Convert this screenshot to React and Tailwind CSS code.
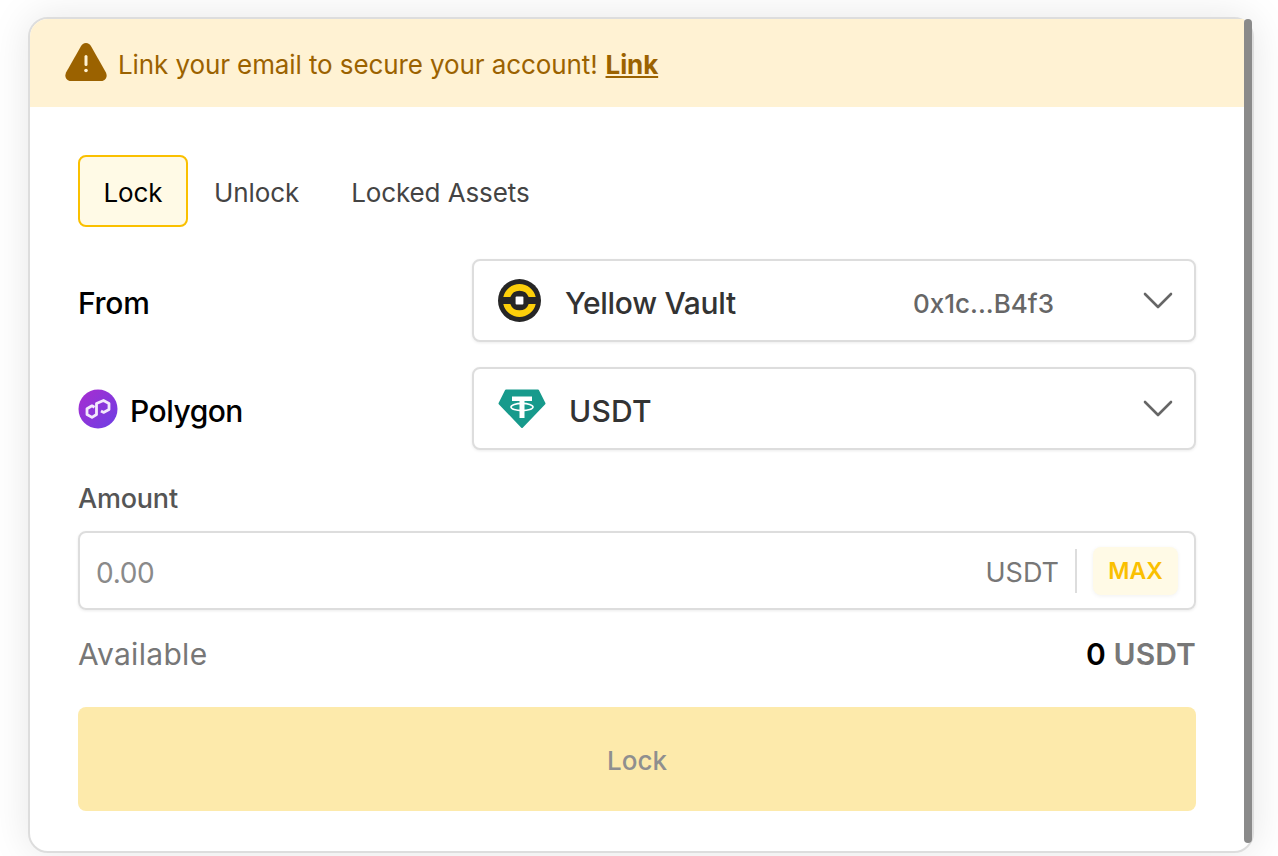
import React from "react";

function WarningIcon() {
  return (
    <svg width="42" height="38" viewBox="0 0 42 38" className="shrink-0 mb-[2px]">
      <path d="M21 0c2.400 0 4 1.300 5.200 3.400l14.600 25.800c2.100 3.900.2 8.800-4.700 8.800H5.900C1 38-.9 33.100 1.200 29.200L15.800 3.400C17 1.300 18.600 0 21 0z" fill="#9b6200" />
      <rect x="19.500" y="12" width="3" height="11" rx="1.500" fill="#fff2d3" />
      <circle cx="21" cy="27.500" r="1.800" fill="#fff2d3" />
    </svg>
  );
}

function VaultIcon() {
  return (
    <svg width="43" height="43" viewBox="0 0 44 44" className="shrink-0">
      <circle cx="22" cy="22" r="22" fill="#262626" />
      <path d="M5.400 18.500A17 17 0 0 1 38.600 18.500H31.400A10 10 0 0 0 12.600 18.500z" fill="#fccf0a" />
      <path d="M5.400 25.500A17 17 0 0 0 38.600 25.500H31.400A10 10 0 0 1 12.600 25.500z" fill="#fccf0a" />
      <rect x="18" y="18" width="8" height="8" rx="1" fill="#fff" />
    </svg>
  );
}

function TetherIcon() {
  return (
    <svg width="48" height="40" viewBox="0 0 48 40" className="shrink-0">
      <path d="M8 1.500H40L46.500 14.500 24 38 1.500 14.500z" fill="#179a8c" stroke="#179a8c" strokeWidth="2" strokeLinejoin="round" />
      <ellipse cx="24" cy="18" rx="11" ry="3.600" fill="none" stroke="#fff" strokeWidth="1.600" />
      <path d="M14 7.500H34V12H26.500V29H21.500V12H14z" fill="#fff" />
    </svg>
  );
}

function PolygonIcon() {
  return (
    <svg width="40" height="40" viewBox="0 0 40 40" className="shrink-0">
      <defs>
        <linearGradient id="polygonGrad" x1="0" y1="0" x2="1" y2="1">
          <stop offset="0" stopColor="#a92cd0" />
          <stop offset="1" stopColor="#6c3fe4" />
        </linearGradient>
      </defs>
      <circle cx="20" cy="20" r="19.500" fill="url(#polygonGrad)" />
      <path d="M16.500 18.200L14 16.800 9 19.700V25.500L14 28.400 18.500 25.500V14.500L25.500 11.500 31 14.500V20.500L25.500 23.400 23 22" fill="none" stroke="#f3e9fc" strokeWidth="2.800" strokeLinejoin="round" />
    </svg>
  );
}

function Chevron() {
  return (
    <svg width="30" height="18" viewBox="0 0 30 18" className="shrink-0">
      <path d="M2 2l13 13L28 2" fill="none" stroke="#666" strokeWidth="2.600" strokeLinecap="round" strokeLinejoin="round" />
    </svg>
  );
}

function SelectBox({ children }) {
  return (
    <div className="w-[724px] h-[83px] flex items-center border-2 border-[#dddddd] rounded-lg bg-white shadow-[0_1px_3px_rgba(0,0,0,0.08)] pl-6 pr-[21px]">
      {children}
    </div>
  );
}

export default function App() {
  return (
    <div className="w-[1278px] h-[856px] overflow-hidden bg-white pt-[17px] pl-[28px] font-['Inter',sans-serif]">
      <div className="w-[1226px] h-[836px] flex border-2 border-[#dddddd] rounded-[20px] bg-white shadow-[0_0_40px_rgba(0,0,0,0.1)]">
        <div className="flex-1 min-w-0">
          {/* Banner */}
          <div className="h-[88px] bg-[#fff2d3] rounded-tl-[18px] flex items-center pl-[35px] text-[26px] tracking-[-0.1px] text-[#9b6200]">
            <WarningIcon />
            <span className="ml-[11px] pt-[2px]">Link your email to secure your account!</span>
            <a className="ml-2 pt-[2px] font-bold underline">Link</a>
          </div>

          <div className="px-12 pt-12">
            {/* Tabs */}
            <div className="flex h-[72px] text-[26px] tracking-[-0.1px] text-[#444444]">
              <div className="flex items-center w-[110px] justify-center pt-[2px] border-2 border-[#fac000] rounded-lg bg-[#fffae6] text-black">Lock</div>
              <div className="flex items-center px-[26px] pt-[2px]">Unlock</div>
              <div className="flex items-center px-[26px] pt-[2px]">Locked Assets</div>
            </div>

            <div className="mt-[32px] flex items-center justify-between">
              <div className="pt-[6px] text-[30px] font-medium tracking-[-0.3px] text-black">From</div>
              <SelectBox>
                <VaultIcon />
                <span className="ml-[24px] pt-[6px] text-[30px] font-medium tracking-[-0.3px] text-[#333333]">Yellow Vault</span>
                <span className="ml-auto mr-[89px] pt-[6px] text-[26px] font-medium text-[#666666]">0x1c...B4f3</span>
                <Chevron />
              </SelectBox>
            </div>

            <div className="mt-[25px] flex items-center justify-between">
              <div className="flex items-center gap-3 text-[30px] font-medium tracking-[-0.5px] text-black">
                <PolygonIcon />
                <span className="pt-[6px]">Polygon</span>
              </div>
              <SelectBox>
                <TetherIcon />
                <span className="ml-[23px] pt-[6px] text-[30px] font-medium tracking-[0.2px] text-[#333333]">USDT</span>
                <span className="ml-auto" />
                <Chevron />
              </SelectBox>
            </div>

            <div className="mt-[33px] h-8 flex items-center text-[27px] font-medium tracking-[-0.2px] text-[#555555]">Amount</div>

            {/* Amount input */}
            <div className="mt-[16px] h-[79px] flex items-center border-2 border-[#dddddd] rounded-lg shadow-[0_1px_3px_rgba(0,0,0,0.08)] pl-4 pr-4 text-[28px] tracking-[-0.3px] text-[#777777]">
              <span className="pt-[4px] text-[#8a8a8a]">0.00</span>
              <span className="ml-auto pt-[5px] text-[27px] tracking-normal text-[#777777]">USDT</span>
              <span className="mx-4 w-[2px] h-11 bg-[#dddddd]" />
              <span className="w-[85px] h-12 mt-[1px] flex items-center justify-center rounded-lg bg-[#fffae6] shadow-[0_1px_4px_rgba(0,0,0,0.06)] text-[23px] font-semibold tracking-normal text-[#fac000]">MAX</span>
            </div>

            <div className="mt-[22px] flex items-center justify-between text-[30px] text-[#777777]">
              <span className="tracking-[0.3px]">Available</span>
              <span className="font-semibold tracking-[0.1px]">
                <span className="text-black">0</span> USDT
              </span>
            </div>

            <button className="mt-[30px] w-full h-[104px] pt-[2px] rounded-lg bg-[#fdeaab] text-[26px] font-medium text-[#8f8f8f]">Lock</button>
          </div>
        </div>

        {/* Scrollbar */}
        <div className="w-2 pb-2 shrink-0">
          <div className="h-full rounded-full bg-[#8a8a8a]" />
        </div>
      </div>
    </div>
  );
}
